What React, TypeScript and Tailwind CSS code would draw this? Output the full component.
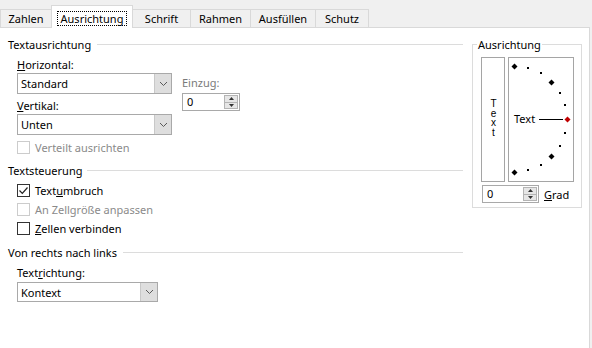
import React from 'react';

const TABS = [
  { label: 'Zahlen', w: 'w-[52px]' },
  { label: 'Ausrichtung', w: 'w-[82px]', active: true },
  { label: 'Schrift', w: 'w-[59px]' },
  { label: 'Rahmen', w: 'w-[61px]' },
  { label: 'Ausfüllen', w: 'w-[66px]' },
  { label: 'Schutz', w: 'w-[54px]' },
];

function Chevron() {
  return (
    <svg width="9" height="6" viewBox="0 0 9 6">
      <path d="M1 1l3.5 3.5L8 1" fill="none" stroke="#5a5a5a" strokeWidth="1" />
    </svg>
  );
}

function Combo({ value, className }: { value: string; className: string }) {
  return (
    <div className={`flex border border-[#a9a9a9] bg-white ${className}`}>
      <span className="flex-1 pl-[3px] leading-[19px] text-black">{value}</span>
      <div className="flex w-[17px] items-center justify-center border-l border-[#c8c8c8] bg-[#dedede]">
        <Chevron />
      </div>
    </div>
  );
}

function Spin({ className }: { className: string }) {
  return (
    <div className={`flex h-[18px] border border-[#a9a9a9] bg-white ${className}`}>
      <span className="flex-1 pl-[4px] leading-[16px] text-black">0</span>
      <div className="my-px mr-px flex w-[14px] flex-col border border-[#b4b4b4] bg-[#e6e6e6]">
        <div className="flex flex-1 items-center justify-center border-b border-[#b4b4b4]">
          <svg width="5" height="3" viewBox="0 0 5 3"><path d="M0 3h5L2.5 0z" fill="#333" /></svg>
        </div>
        <div className="flex flex-1 items-center justify-center">
          <svg width="5" height="3" viewBox="0 0 5 3"><path d="M0 0h5L2.5 3z" fill="#333" /></svg>
        </div>
      </div>
    </div>
  );
}

function Check({ label, checked, disabled }: { label: React.ReactNode; checked?: boolean; disabled?: boolean }) {
  return (
    <div className="flex h-[13px] items-center">
      <div className={`flex h-[13px] w-[13px] items-center justify-center border bg-white ${disabled ? 'border-[#cccccc]' : 'border-[#333333]'}`}>
        {checked && (
          <svg width="11" height="11" viewBox="0 0 11 11">
            <path d="M1.5 5.5l2.8 2.8L9.5 2.5" fill="none" stroke="#222" strokeWidth="1.2" />
          </svg>
        )}
      </div>
      <span className={`ml-[5px] leading-[15px] ${disabled ? 'text-[#8a8a8a]' : 'text-black'}`}>{label}</span>
    </div>
  );
}

function Section({ title, gap }: { title: string; gap: string }) {
  return (
    <div className="flex h-[15px] items-center">
      <span className="leading-[15px] text-black">{title}</span>
      <div className={`h-px flex-1 bg-[#dcdcdc] ${gap}`} />
    </div>
  );
}

function Dial() {
  const cx = 5;
  const cy = 61;
  const r = 53;
  const pt = (deg: number) => {
    const a = (deg * Math.PI) / 180;
    return [cx + r * Math.cos(a), cy - r * Math.sin(a)];
  };
  const diamond = (x: number, y: number, s: number) =>
    `${x},${y - s} ${x + s},${y} ${x},${y + s} ${x - s},${y}`;
  const big = [90, 45, -45, -90];
  const small = [75, 60, 30, 15, -15, -30, -60, -75];
  return (
    <svg width="64" height="123" viewBox="0 0 64 123">
      {big.map((d) => {
        const [x, y] = pt(d);
        return <polygon key={d} points={diamond(Math.round(x) + 0.5, Math.round(y) + 0.5, 3)} fill="#000" />;
      })}
      {small.map((d) => {
        const [x, y] = pt(d);
        return <rect key={d} x={Math.round(x) - 1} y={Math.round(y) - 1} width="2" height="2" fill="#000" />;
      })}
      <text x="5" y="65" fontSize="11" fontFamily="Noto Sans, sans-serif" fill="#000">Text</text>
      <line x1="30" y1="61.5" x2="54" y2="61.5" stroke="#000" strokeWidth="1" />
      <polygon points={diamond(58.5, 61.5, 3)} fill="#c00000" />
    </svg>
  );
}

export default function App() {
  return (
    <div className="flex h-[348px] w-[592px] flex-col overflow-hidden bg-[#f0f0f0] font-['Noto_Sans',sans-serif] text-[11px]">
      {/* Tabs */}
      <div className="flex h-[27px] items-end">
        {TABS.map((t, i) =>
          t.active ? (
            <div
              key={t.label}
              className={`relative z-10 -mb-px flex h-[23px] items-start justify-center border border-b-0 border-[#d9d9d9] bg-white pt-[5px] ${t.w} ${i > 0 ? '-ml-px' : ''}`}
            >
              <span className="border border-dotted border-black px-[3px] leading-[13px] text-black">{t.label}</span>
            </div>
          ) : (
            <div
              key={t.label}
              className={`flex h-[18px] items-center justify-center border border-b-0 border-[#d9d9d9] bg-[#f0f0f0] leading-[15px] text-black ${t.w} ${i > 0 ? '-ml-px' : ''}`}
            >
              {t.label}
            </div>
          ),
        )}
      </div>

      {/* Panel */}
      <div className="flex w-[590px] flex-1 border-t border-r border-[#d9d9d9] bg-white pl-[8px] pt-[9px]">
        <div className="flex w-[455px] flex-col">
          <Section title="Textausrichtung" gap="ml-[6px]" />
          <div className="flex pl-[9px]">
            <div className="flex w-[155px] flex-col">
              <span className="mt-[5px] h-[15px] leading-[15px] text-black">
                <u>H</u>orizontal:
              </span>
              <Combo value="Standard" className="mt-px h-[21px] w-[155px]" />
              <span className="mt-[4px] h-[15px] leading-[15px] text-black">
                <u>V</u>ertikal:
              </span>
              <Combo value="Unten" className="mt-px h-[21px] w-[155px]" />
              <div className="mt-[6px]">
                <Check label="Verteilt ausrichten" disabled />
              </div>
            </div>
            <div className="ml-[10px] flex flex-col">
              <span className="mt-[23px] h-[15px] leading-[15px] text-[#7a7a7a]">Einzug:</span>
              <Spin className="mt-[3px] w-[58px]" />
            </div>
          </div>

          <div className="mt-[9px]">
            <Section title="Textsteuerung" gap="ml-[5px]" />
          </div>
          <div className="flex flex-col gap-[6px] pl-[9px] pt-[6px]">
            <Check
              checked
              label={
                <>
                  Text<u>u</u>mbruch
                </>
              }
            />
            <Check label="An Zellgröße anpassen" disabled />
            <Check
              label={
                <>
                  <u>Z</u>ellen verbinden
                </>
              }
            />
          </div>

          <div className="mt-[10px]">
            <Section title="Von rechts nach links" gap="ml-[6px]" />
          </div>
          <div className="flex flex-col pl-[9px]">
            <span className="mt-[5px] h-[15px] leading-[15px] text-black">
              Text<u>r</u>ichtung:
            </span>
            <Combo value="Kontext" className="mt-[2px] h-[20px] w-[141px]" />
          </div>
        </div>

        {/* Orientation group */}
        <fieldset className="ml-[9px] h-fit w-[110px] border border-[#dcdcdc] px-0 pb-[4px]">
          <legend className="ml-[4px] px-px leading-[15px] text-black">Ausrichtung</legend>
          <div className="flex flex-col pl-[8px]">
            <div className="mt-[5px] flex h-[125px] gap-[3px]">
              <div className="flex w-[24px] items-center justify-center border border-[#a5a5a5] pb-[6px]">
                <span className="font-['Liberation_Sans',sans-serif] text-[10px] leading-[12px] tracking-[-1.5px] text-black [text-orientation:upright] [writing-mode:vertical-lr]">
                  Text
                </span>
              </div>
              <div className="w-[66px] border border-[#a5a5a5]">
                <Dial />
              </div>
            </div>
            <div className="mt-[3px] flex items-center">
              <Spin className="ml-px w-[57px]" />
              <span className="ml-[5px] leading-[15px] text-black">
                <u>G</u>rad
              </span>
            </div>
          </div>
        </fieldset>
      </div>
    </div>
  );
}
